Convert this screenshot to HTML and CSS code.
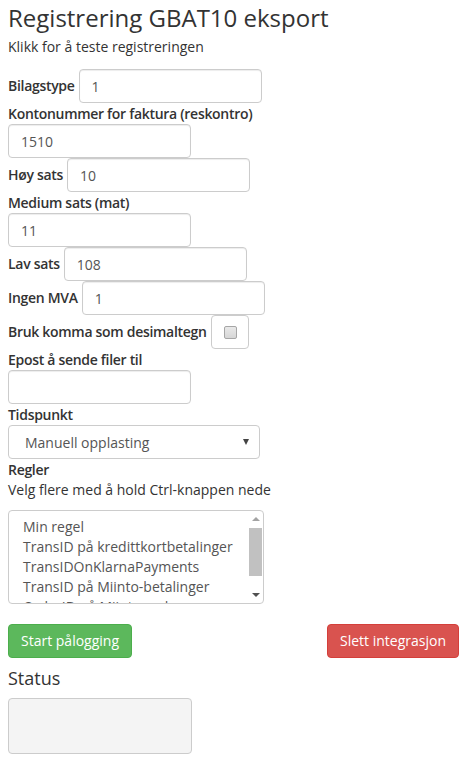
FILE: index.html
```html
<!DOCTYPE html>
<html lang="no">
<head>
  <meta charset="UTF-8">
  <meta name="viewport" content="width=device-width, initial-scale=1.0">
  <title>Registrering GBAT10 eksport</title>
  <link rel="stylesheet" href="styles.css">
</head>
<body>
  <div class="container">
    <h2 class="title">Registrering GBAT10 eksport</h2>
    <p class="intro">Klikk for å teste registreringen</p>

    <form id="export-form" class="export-form">
      <div class="row-inline">
        <label for="bilagstype">Bilagstype</label>
        <input type="text" id="bilagstype" class="field" value="1">
      </div>
      <div class="row-stacked">
        <label for="kontonummer">Kontonummer for faktura (reskontro)</label>
        <input type="text" id="kontonummer" class="field" value="1510">
      </div>
      <div class="row-inline">
        <label for="hoy-sats">Høy sats</label>
        <input type="text" id="hoy-sats" class="field" value="10">
      </div>
      <div class="row-stacked">
        <label for="medium-sats">Medium sats (mat)</label>
        <input type="text" id="medium-sats" class="field" value="11">
      </div>
      <div class="row-inline">
        <label for="lav-sats">Lav sats</label>
        <input type="text" id="lav-sats" class="field" value="108">
      </div>
      <div class="row-inline">
        <label for="ingen-mva">Ingen MVA</label>
        <input type="text" id="ingen-mva" class="field" value="1">
      </div>
      <div class="row-inline">
        <label for="komma">Bruk komma som desimaltegn</label>
        <span class="check-box"><input type="checkbox" id="komma"></span>
      </div>
      <div class="row-stacked">
        <label for="epost">Epost å sende filer til</label>
        <input type="text" id="epost" class="field">
      </div>
      <div class="row-stacked">
        <label for="tidspunkt">Tidspunkt</label>
        <div class="select-wrap">
          <select id="tidspunkt" class="select">
            <option>Manuell opplasting</option>
            <option>Daglig</option>
            <option>Ukentlig</option>
          </select>
        </div>
      </div>
      <div class="row-stacked">
        <label>Regler</label>
        <p class="hint">Velg flere med å hold Ctrl-knappen nede</p>
        <div class="rules" id="regler">
          <div class="rules-list">
            <div class="rule">Min regel</div>
            <div class="rule">TransID på kredittkortbetalinger</div>
            <div class="rule">TransIDOnKlarnaPayments</div>
            <div class="rule">TransID på Miinto-betalinger</div>
            <div class="rule">OrderID på Miinto-ordrer</div>
          </div>
          <div class="scrollbar">
            <span class="scroll-btn"><span class="arrow-up"></span></span>
            <span class="scroll-track"><span class="scroll-thumb"></span></span>
            <span class="scroll-btn"><span class="arrow-down"></span></span>
          </div>
        </div>
      </div>

      <div class="actions">
        <button type="button" class="btn btn-success">Start pålogging</button>
        <button type="button" class="btn btn-danger">Slett integrasjon</button>
      </div>
    </form>

    <h4 class="status-title">Status</h4>
    <div id="status" class="status-box"></div>
  </div>
</body>
</html>
```

FILE: styles.css
```css
body {
  font-family: 'Open Sans', 'DejaVu Sans', sans-serif;
  font-size: 14px;
  line-height: 20px;
  color: #333;
  background-color: #fff;
  margin: 0;
  padding: 0;
}

.container {
  padding: 3px 8px 0;
}

.title {
  font-size: 24px;
  font-weight: normal;
  line-height: 30px;
  margin: 0 0 4px;
}

.intro {
  margin: 0 0 12px;
}

label {
  font-weight: 600;
  letter-spacing: -0.3px;
}

.row-inline {
  display: flex;
  align-items: center;
  gap: 4px;
}

.row-stacked label {
  display: block;
  margin-top: 1px;
}

.field {
  display: block;
  width: 183px;
  height: 34px;
  padding: 6px 12px;
  font-family: inherit;
  font-size: 14px;
  color: #555;
  background-color: #fff;
  border: 1px solid #ccc;
  border-radius: 4px;
  box-shadow: inset 0 1px 1px rgba(0, 0, 0, 0.075);
  box-sizing: border-box;
  outline: none;
}

.check-box {
  display: flex;
  align-items: center;
  width: 38px;
  height: 34px;
  padding-left: 12px;
  border: 1px solid #ccc;
  border-radius: 4px;
  box-sizing: border-box;
}

.check-box input {
  appearance: none;
  width: 13px;
  height: 13px;
  margin: 0;
  background: linear-gradient(#e9e9e9, #d6d6d6);
  border: 1px solid #a6a6a6;
  border-radius: 2px;
  box-sizing: border-box;
}

.select-wrap {
  position: relative;
  width: 252px;
}

.select-wrap::after {
  content: "";
  position: absolute;
  right: 11px;
  top: 14px;
  border-left: 3px solid transparent;
  border-right: 3px solid transparent;
  border-top: 6px solid #444;
}

.select {
  appearance: none;
  display: block;
  width: 100%;
  height: 34px;
  padding: 6px 12px 6px 16px;
  font-family: inherit;
  font-size: 14px;
  color: #555;
  background-color: #fff;
  border: 1px solid #ccc;
  border-radius: 4px;
  box-sizing: border-box;
  outline: none;
}

.hint {
  margin: 0 0 10px;
}

/* multi-select look-alike */
.rules {
  display: flex;
  width: 256px;
  height: 94px;
  color: #555;
  background-color: #fff;
  border: 1px solid #ccc;
  border-radius: 4px;
  box-sizing: border-box;
  overflow: hidden;
}

.rules-list {
  flex: 1;
  padding: 6px 0 0 14px;
  overflow: hidden;
  white-space: nowrap;
}

.rule {
  line-height: 20px;
}

.scrollbar {
  display: flex;
  flex-direction: column;
  width: 15px;
}

.scroll-btn {
  display: flex;
  align-items: center;
  justify-content: center;
  height: 16px;
}

.arrow-up {
  border-left: 4px solid transparent;
  border-right: 4px solid transparent;
  border-bottom: 4px solid #a3a3a3;
}

.arrow-down {
  border-left: 4px solid transparent;
  border-right: 4px solid transparent;
  border-top: 4px solid #505050;
}

.scroll-track {
  flex: 1;
  padding: 1px 1px 0;
}

.scroll-thumb {
  display: block;
  height: 48px;
  background-color: #c1c1c1;
}

.actions {
  display: flex;
  justify-content: space-between;
  margin-top: 20px;
}

.btn {
  height: 34px;
  padding: 6px 12px;
  font-family: inherit;
  font-size: 14px;
  line-height: 20px;
  color: #fff;
  border: 1px solid transparent;
  border-radius: 4px;
  cursor: pointer;
}

.btn-success {
  background-color: #5cb85c;
  border-color: #4cae4c;
}

.btn-danger {
  background-color: #d9534f;
  border-color: #d43f3a;
}

.status-title {
  font-size: 18px;
  font-weight: normal;
  line-height: 20px;
  margin: 10px 0;
}

.status-box {
  width: 184px;
  height: 56px;
  background-color: #f4f4f4;
  border: 1px solid #ccc;
  border-radius: 4px;
  box-sizing: border-box;
}
```
